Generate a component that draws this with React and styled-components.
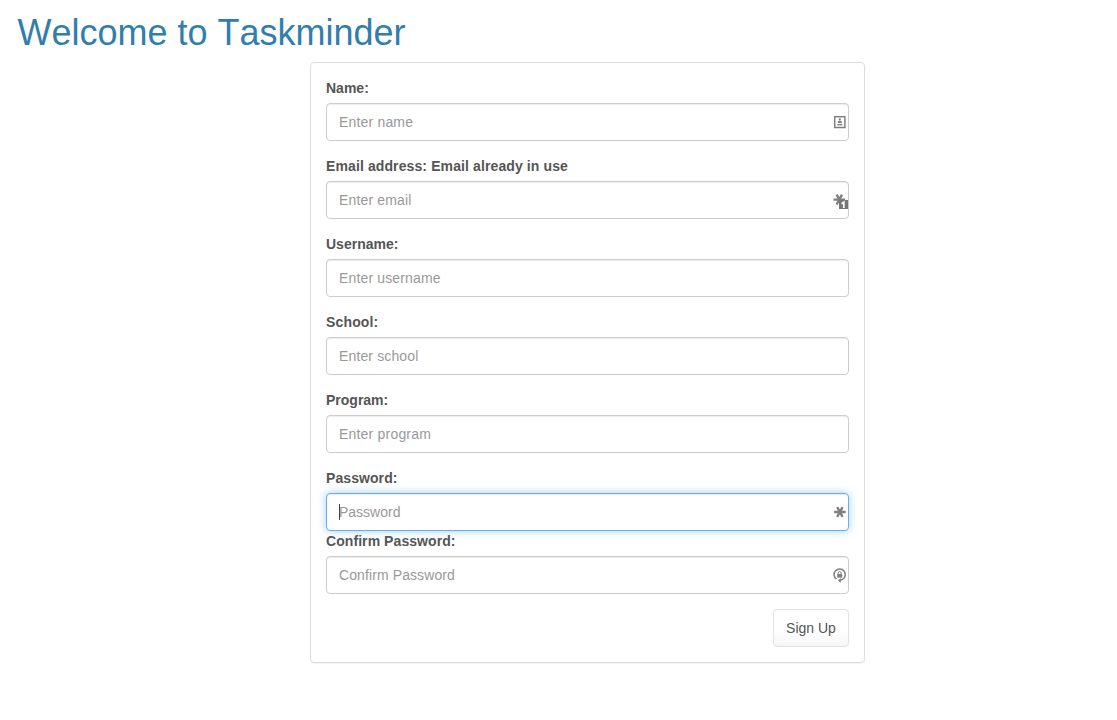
import React from "react";
import styled, { createGlobalStyle, css } from "styled-components";

const GlobalStyle = createGlobalStyle`
  *, *::before, *::after { box-sizing: border-box; }
  body {
    margin: 0;
    background: #fff;
    color: #555;
    font: 14px/20px "Liberation Sans", Arial, sans-serif;
  }
`;

const Page = styled.main`
  height: 720px;
  padding-top: 13px;
  overflow: hidden;
`;

const Title = styled.h1`
  margin: 0 0 9px 17.5px;
  color: #317eac;
  font-size: 36px;
  font-weight: 500;
  line-height: 40px;
  font-kerning: none;
`;

const Panel = styled.form`
  width: 555px;
  margin-left: 310px;
  padding: 15px;
  border: 1px solid #ddd;
  border-radius: 4px;
  box-shadow: 0 1px 1px rgba(0, 0, 0, 0.05);
`;

const Field = styled.div`
  margin-bottom: ${(p) => (p.$tight ? 0 : 15)}px;
`;

const Label = styled.label`
  display: block;
  margin-bottom: 5px;
  font-weight: 700;
  letter-spacing: ${(p) => p.$spacing || 0}px;
`;

const focused = css`
  border-color: #66afe9;
  box-shadow: inset 0 1px 1px rgba(0, 0, 0, 0.075), 0 0 8px rgba(102, 175, 233, 0.6);
`;

const InputBox = styled.div`
  position: relative;
  display: flex;
  align-items: center;
  height: 38px;
  border: 1px solid #ccc;
  border-radius: 4px;
  background: #fff;
  box-shadow: inset 0 1px 1px rgba(0, 0, 0, 0.075);
  ${(p) => p.$focused && focused}
`;

const Input = styled.input`
  flex: 1;
  min-width: 0;
  height: 36px;
  padding: 8px 12px;
  border: 0;
  outline: 0;
  background: transparent;
  color: #555;
  font: inherit;
  letter-spacing: ${(p) => p.$spacing || 0}px;
  &::placeholder { color: #999; opacity: 1; }
`;

const Caret = styled.span`
  position: absolute;
  left: 12px;
  top: 10px;
  width: 1px;
  height: 16px;
  background: #444;
`;

const IconSlot = styled.svg`
  position: absolute;
  right: 0;
  top: 9px;
  width: 16px;
  height: 18px;
  color: #808080;
`;

const Actions = styled.div`
  display: flex;
  justify-content: flex-end;
`;

const Button = styled.button`
  width: 76px;
  height: 38px;
  padding: 0;
  border: 1px solid #e2e2e2;
  border-radius: 4px;
  background: linear-gradient(#fff, #fff 60%, #f5f5f5);
  color: #555;
  font: inherit;
`;

const Star = () => (
  <path
    d="M1.2 9H12.8M4.3 4.1L9.7 13.9M9.7 4.1L4.3 13.9"
    stroke="currentColor"
    strokeWidth="2.4"
    fill="none"
  />
);

const icons = {
  contact: (
    <IconSlot viewBox="0 0 16 18">
      <rect x="2.7" y="3.7" width="10.2" height="10.8" fill="#fff" stroke="currentColor" strokeWidth="1.5" />
      <circle cx="7.8" cy="6.4" r="1.1" fill="currentColor" />
      <path d="M5.8 10V8.8Q5.8 7.7 7.8 7.7Q9.8 7.7 9.8 8.8V10Z" fill="currentColor" />
      <path d="M5.3 11.7H10.3" stroke="currentColor" strokeWidth="1.4" />
    </IconSlot>
  ),
  badge: (
    <IconSlot viewBox="0 0 16 18">
      <g transform="translate(.3 -0.4)"><Star /></g>
      <rect x="7" y="9" width="9" height="9" fill="#777" />
      <path d="M9.6 12.7L11.8 11.2V17" fill="none" stroke="#fff" strokeWidth="1.7" />
    </IconSlot>
  ),
  star: (
    <IconSlot viewBox="0 0 16 18"><g transform="translate(.9 0)"><Star /></g></IconSlot>
  ),
  lock: (
    <IconSlot viewBox="0 0 16 18">
      <path d="M4.4 13.2A5.6 5.6 0 1 1 10.6 13.4L8 14.4" fill="none" stroke="currentColor" strokeWidth="1.5" />
      <path d="M8.8 12L5.9 14.4L8.8 16.7Z" fill="currentColor" />
      <rect x="5.2" y="8" width="5" height="3.6" fill="currentColor" />
      <path d="M6.2 8.2V7.1a1.5 1.5 0 0 1 3 0v1.1" fill="none" stroke="currentColor" strokeWidth="1" />
    </IconSlot>
  ),
};

const fields = [
  { id: "name", label: "Name:", placeholder: "Enter name", spacing: 0.18, icon: "contact" },
  { id: "email", label: "Email address: Email already in use", labelSpacing: 0.11, placeholder: "Enter email", spacing: 0.16, icon: "badge" },
  { id: "username", label: "Username:", placeholder: "Enter username", spacing: 0.15 },
  { id: "school", label: "School:", labelSpacing: 0.15, placeholder: "Enter school", spacing: 0.13 },
  { id: "program", label: "Program:", placeholder: "Enter program", spacing: 0.2 },
  { id: "password", label: "Password:", labelSpacing: 0.08, placeholder: "Password", icon: "star", type: "password", focused: true, tight: true },
  { id: "confirm", label: "Confirm Password:", labelSpacing: 0.07, placeholder: "Confirm Password", spacing: 0.1, icon: "lock", type: "password" },
];

export default function App() {
  return (
    <Page>
      <GlobalStyle />
      <Title>Welcome to Taskminder</Title>
      <Panel>
        {fields.map((f) => (
          <Field key={f.id} $tight={f.tight}>
            <Label htmlFor={f.id} $spacing={f.labelSpacing}>{f.label}</Label>
            <InputBox $focused={f.focused}>
              <Input id={f.id} type={f.type || "text"} placeholder={f.placeholder} $spacing={f.spacing} />
              {f.focused && <Caret />}
              {icons[f.icon]}
            </InputBox>
          </Field>
        ))}
        <Actions>
          <Button type="button">Sign Up</Button>
        </Actions>
      </Panel>
    </Page>
  );
}
